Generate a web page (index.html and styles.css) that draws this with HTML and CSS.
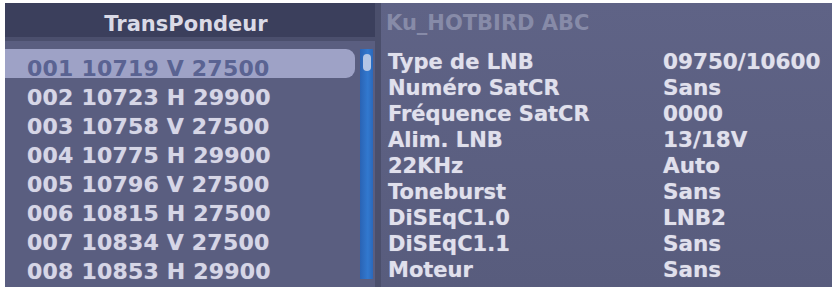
FILE: index.html
```html
<!DOCTYPE html>
<html>
<head>
<meta charset="utf-8">
<link rel="stylesheet" href="styles.css">
</head>
<body>
<div class="screen">
  <div class="left">
    <div class="header">TransPondeur</div>
    <div class="list-wrap">
      <div class="list">
        <div class="row sel">001 10719 V 27500</div>
        <div class="row">002 10723 H 29900</div>
        <div class="row">003 10758 V 27500</div>
        <div class="row">004 10775 H 29900</div>
        <div class="row">005 10796 V 27500</div>
        <div class="row">006 10815 H 27500</div>
        <div class="row">007 10834 V 27500</div>
        <div class="row">008 10853 H 29900</div>
      </div>
      <div class="scroll"><div class="thumb"></div></div>
    </div>
  </div>
  <div class="divider"></div>
  <div class="right">
    <div class="title">Ku_HOTBIRD ABC</div>
    <div class="props">
      <div class="prop"><span class="lbl">Type de LNB</span><span class="val">09750/10600</span></div>
      <div class="prop"><span class="lbl">Numéro SatCR</span><span class="val">Sans</span></div>
      <div class="prop"><span class="lbl">Fréquence SatCR</span><span class="val">0000</span></div>
      <div class="prop"><span class="lbl">Alim. LNB</span><span class="val">13/18V</span></div>
      <div class="prop"><span class="lbl">22KHz</span><span class="val">Auto</span></div>
      <div class="prop"><span class="lbl">Toneburst</span><span class="val">Sans</span></div>
      <div class="prop"><span class="lbl">DiSEqC1.0</span><span class="val">LNB2</span></div>
      <div class="prop"><span class="lbl">DiSEqC1.1</span><span class="val">Sans</span></div>
      <div class="prop"><span class="lbl">Moteur</span><span class="val">Sans</span></div>
    </div>
  </div>
</div>
</body>
</html>
```
FILE: styles.css
```css
html, body {
  margin: 0;
  padding: 0;
  background: #ffffff;
}
body {
  width: 832px;
  height: 287px;
  overflow: hidden;
  font-family: "DejaVu Sans", sans-serif;
  font-weight: bold;
}
.screen {
  display: flex;
  margin: 3px 0 0 5px;
  height: 284px;
}
.left {
  width: 370px;
  display: flex;
  flex-direction: column;
  background: #5a5e80;
}
.header {
  height: 38px;
  box-sizing: border-box;
  padding: 6px 8px 0 0;
  line-height: 31px;
  font-size: 21px;
  text-align: center;
  color: #dadae6;
  background: #3b3f5c;
  border-bottom: 4px solid #4b4f6d;
}
.list-wrap {
  flex: 1;
  display: flex;
  padding-top: 8px;
}
.list {
  width: 350px;
}
.row {
  height: 29px;
  box-sizing: border-box;
  padding: 9px 0 0 22px;
  line-height: 22px;
  font-size: 22px;
  color: #d6d6e6;
  white-space: nowrap;
  letter-spacing: 0.2px;
  text-shadow: 0 0 1px rgba(220, 220, 240, 0.5);
}
.row.sel {
  background: #9ea2c6;
  color: #5a6392;
  border-radius: 0 9px 9px 0;
  text-shadow: none;
}
.scroll {
  margin-left: 5px;
  width: 13px;
  height: 230px;
  background: linear-gradient(90deg, #2a63b4, #3279cf 60%, #2b68ba);
  display: flex;
  justify-content: center;
  padding-top: 5px;
  box-sizing: border-box;
}
.thumb {
  width: 8px;
  height: 17px;
  border-radius: 4px;
  background: #b3c6e6;
}
.divider {
  width: 6px;
  background: #4b4f6c;
}
.right {
  flex: 1;
  background: linear-gradient(180deg, #5f6386, #585c7d);
  padding: 7px 0 0 5px;
}
.title {
  line-height: 26px;
  font-size: 21px;
  color: #878ba8;
  margin-bottom: 13px;
}
.prop {
  display: flex;
  height: 26px;
  line-height: 26px;
  font-size: 21px;
  color: #e0e0ec;
  white-space: nowrap;
  padding-left: 2px;
  text-shadow: 0 0 1px rgba(220, 220, 240, 0.5);
}
.lbl {
  width: 275px;
}
.val {
  font-size: 21.5px;
}
```
